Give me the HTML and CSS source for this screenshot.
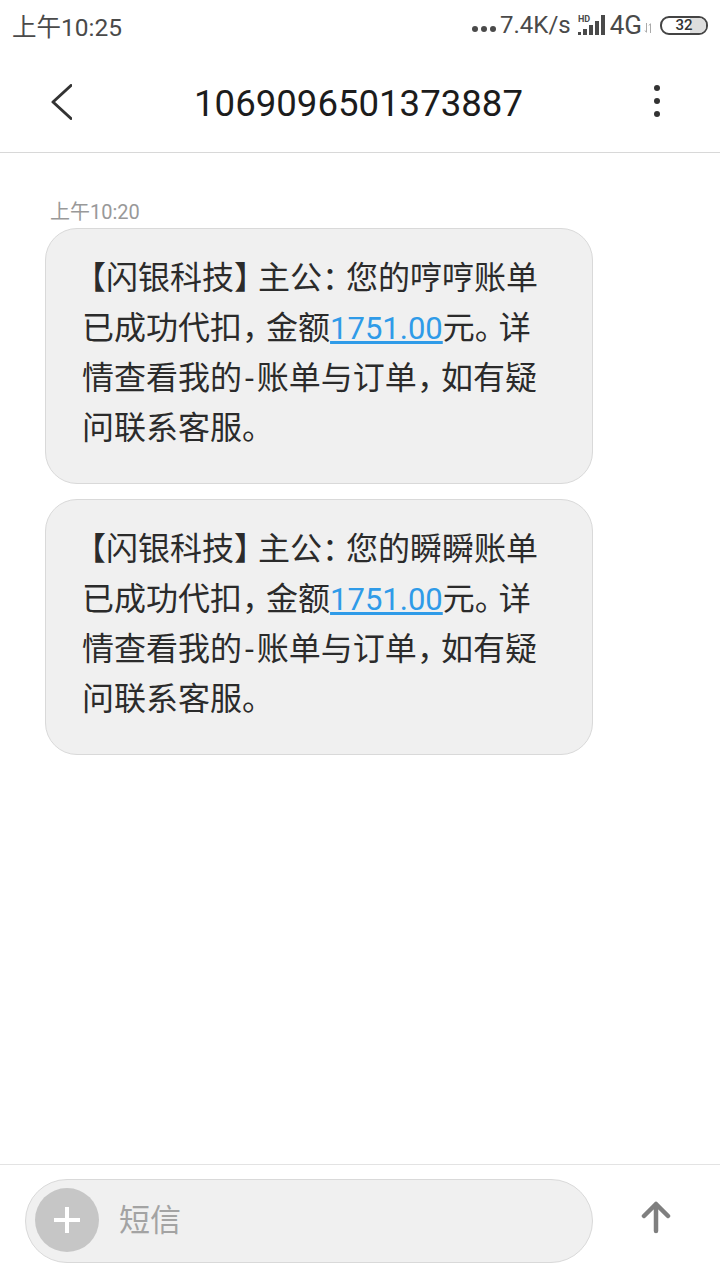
FILE: index.html
```html
<!DOCTYPE html>
<html lang="zh-CN">
<head>
  <meta charset="UTF-8">
  <meta name="viewport" content="width=device-width, initial-scale=1.0">
  <title>1069096501373887</title>
  <link rel="stylesheet" href="styles.css">
</head>
<body>
  <div class="app">
    <!-- Status bar -->
    <div class="status-bar">
      <span class="status-time">上午10:25</span>
      <div class="status-right">
        <svg class="status-dots" width="24" height="6" viewBox="0 0 24 6"><circle cx="3" cy="3" r="3"/><circle cx="12" cy="3" r="3"/><circle cx="21" cy="3" r="3"/></svg>
        <span class="status-speed">7.4K/s</span>
        <svg class="status-signal" width="28" height="22" viewBox="0 0 28 22">
          <text x="0" y="7.500" class="hd-text">HD</text>
          <rect x="0" y="18" width="3" height="3"/>
          <rect x="5" y="15" width="4" height="6"/>
          <rect x="11" y="11" width="4" height="10"/>
          <rect x="17" y="7" width="4" height="14"/>
          <rect x="23" y="1" width="4" height="20"/>
        </svg>
        <span class="status-net">4G</span>
        <svg class="status-arrows" width="9" height="10" viewBox="0 0 9 10"><path d="M2.500 0v9M1 7.500l1.500 2M6.500 10V1M5 2.500l1.500-2"/></svg>
        <div class="battery"><span class="battery-level"></span><span class="battery-num">32</span></div>
      </div>
    </div>

    <!-- Header -->
    <div class="header">
      <svg class="back-icon" width="24" height="36" viewBox="0 0 24 36"><path d="M23 1.500L5 18l18 16.500"/></svg>
      <h1 class="title">1069096501373887</h1>
      <svg class="more-icon" width="10" height="36" viewBox="0 0 10 36"><circle cx="5" cy="4" r="3"/><circle cx="5" cy="17" r="3"/><circle cx="5" cy="30" r="3"/></svg>
    </div>

    <!-- Messages -->
    <div class="messages">
      <div class="msg-time">上午10:20</div>
      <div class="bubble"><span class="open">【</span>闪银科技<span class="punct">】</span>主公<span class="punct">：</span>您的哼哼账单<br>已成功代扣<span class="punct">，</span>金额<a class="amount">1751.00</a>元<span class="punct">。</span>详<br>情查看我的<span class="dash">-</span>账单与订单<span class="punct">，</span>如有疑<br>问联系客服。</div>
      <div class="bubble"><span class="open">【</span>闪银科技<span class="punct">】</span>主公<span class="punct">：</span>您的瞬瞬账单<br>已成功代扣<span class="punct">，</span>金额<a class="amount">1751.00</a>元<span class="punct">。</span>详<br>情查看我的<span class="dash">-</span>账单与订单<span class="punct">，</span>如有疑<br>问联系客服。</div>
    </div>

    <!-- Input -->
    <div class="footer">
      <div class="input-box">
        <div class="add-btn">
          <svg width="28" height="28" viewBox="0 0 28 28"><path d="M14 1v26M1 14h26"/></svg>
        </div>
        <span class="placeholder">短信</span>
      </div>
      <svg class="send-icon" width="30" height="36" viewBox="0 0 30 36"><path d="M15 30V3M3 15L15 3l12 12"/></svg>
    </div>
  </div>
</body>
</html>
```

FILE: styles.css
```css
/* General Styles */
body {
  margin: 0;
  padding: 0;
  background: #fff;
  font-family: "Roboto", "Noto Sans CJK SC", sans-serif;
  color: #222;
}

.app {
  display: flex;
  flex-direction: column;
  height: 1280px;
}

/* Status bar */
.status-bar {
  display: flex;
  justify-content: space-between;
  align-items: center;
  height: 50px;
  padding: 0 12px 2px;
  color: #4a4a4a;
}

.status-time {
  font-size: 24.500px;
}

.status-right {
  display: flex;
  align-items: center;
}

.status-dots {
  fill: #4a4a4a;
  margin-top: 8px;
  margin-right: 4px;
}

.status-speed {
  font-size: 24px;
}

.status-net {
  font-size: 26px;
}

.status-signal {
  fill: #4a4a4a;
  margin-left: 7px;
  margin-right: 4px;
}

.hd-text {
  font-size: 9px;
  font-weight: bold;
}

.status-arrows {
  fill: none;
  stroke: #aaa;
  stroke-width: 1;
  margin: 6px 7px 0 2px;
}

.battery {
  position: relative;
  width: 44px;
  height: 15px;
  border: 2px solid #444;
  border-radius: 9px;
  overflow: hidden;
  display: flex;
  align-items: center;
  justify-content: center;
}

.battery-level {
  position: absolute;
  right: 0;
  top: 0;
  bottom: 0;
  width: 16px;
  background: #ddd;
}

.battery-num {
  position: relative;
  font-size: 15px;
  font-weight: 500;
  color: #333;
}

/* Header */
.header {
  display: flex;
  align-items: center;
  justify-content: space-between;
  height: 100px;
  padding: 0 58px 0 48px;
  border-bottom: 1px solid #d8d8d8;
}

.back-icon {
  fill: none;
  stroke: #333;
  stroke-width: 3;
  stroke-linecap: round;
  stroke-linejoin: round;
}

.title {
  margin: 3px 7px 0 0;
  font-size: 36.600px;
  font-weight: 400;
  color: #1c1c1c;
}

.more-icon {
  fill: #333;
}

/* Messages */
.messages {
  flex: 1;
  padding: 46px 45px 0;
}

.msg-time {
  font-size: 20px;
  line-height: 26px;
  color: #999;
  margin-left: 5px;
  margin-bottom: 3px;
}

.bubble {
  width: 472px;
  padding: 24px 38px 30px 36px;
  margin-bottom: 15px;
  background: #f0f0f0;
  border: 1px solid #d9d9d9;
  border-radius: 32px;
  font-size: 32px;
  line-height: 50px;
  color: #2b2b2b;
}

/* narrow punctuation, the reference font sets these at 3/4 width */
.punct {
  letter-spacing: -8px;
}

.open {
  margin-left: -8px;
}

.dash {
  margin: 0 3px;
}

.amount {
  font-size: 31px;
  line-height: 1;
  color: #2f9be8;
  text-decoration: underline;
}

/* Input */
.footer {
  display: flex;
  align-items: center;
  height: 115px;
  padding: 0 0 0 25px;
  border-top: 1px solid #e3e3e3;
}

.input-box {
  display: flex;
  align-items: center;
  width: 566px;
  height: 82px;
  background: #f0f0f0;
  border: 1px solid #d9d9d9;
  border-radius: 42px;
  margin-top: -4px;
}

.add-btn {
  display: flex;
  align-items: center;
  justify-content: center;
  width: 64px;
  height: 64px;
  margin-left: 9px;
  margin-top: -2px;
  border-radius: 50%;
  background: #c6c6c6;
}

.add-btn svg {
  fill: none;
  stroke: #fff;
  stroke-width: 4;
}

.placeholder {
  margin-left: 20px;
  margin-top: -6px;
  font-size: 31px;
  color: #a3a3a3;
}

.send-icon {
  margin-left: 48px;
  margin-top: -8px;
  fill: none;
  stroke: #7f7f7f;
  stroke-width: 4.500;
  stroke-linecap: round;
  stroke-linejoin: round;
}
```
